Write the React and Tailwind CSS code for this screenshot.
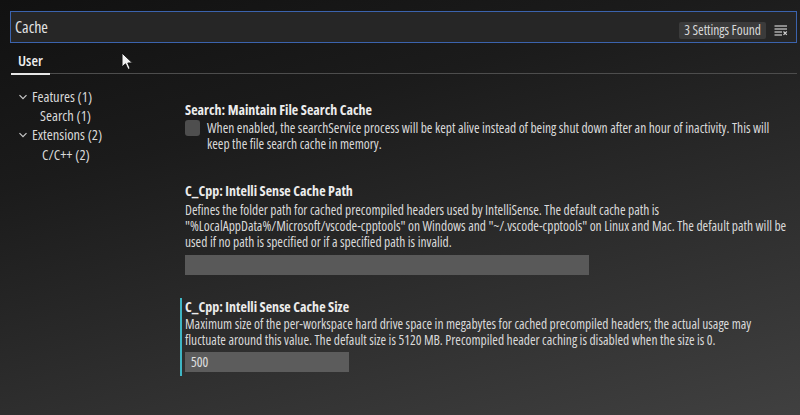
import React from "react";

function Chevron() {
  return (
    <svg width="10" height="10" viewBox="0 0 10 10" className="shrink-0">
      <polyline points="1.5,3.2 5,6.7 8.5,3.2" fill="none" stroke="#c9c9c9" strokeWidth="1.2" />
    </svg>
  );
}

function FilterIcon() {
  return (
    <svg width="14" height="12" viewBox="0 0 14 12">
      <g stroke="#cfcfcf" strokeWidth="1.2">
        <line x1="0.5" y1="2" x2="13" y2="2" />
        <line x1="0.5" y1="5" x2="13" y2="5" />
        <line x1="0.5" y1="8" x2="8" y2="8" />
        <line x1="0.5" y1="11" x2="8" y2="11" />
        <line x1="9.5" y1="7.5" x2="12.8" y2="10.8" />
        <line x1="12.8" y1="7.5" x2="9.5" y2="10.8" />
      </g>
    </svg>
  );
}

function Cursor() {
  return (
    <svg width="13" height="19" viewBox="0 0 13 19" className="absolute left-[121px] top-[52px]">
      <path d="M1 1 L1 15 L4.5 11.8 L7 17.5 L9.2 16.5 L6.8 11 L11.5 11 Z" fill="#f2f2f2" stroke="#111" strokeWidth="1" strokeLinejoin="round" />
    </svg>
  );
}

function Setting({ title, lines, focused, children }) {
  return (
    <div className={`border-l-2 pl-[3px] ${focused ? "border-[#3fb6c4]" : "border-transparent"}`}>
      <p className="text-[14px] leading-[17px] font-bold text-[#ececec] whitespace-nowrap">{title}</p>
      {children ? children(lines) : null}
    </div>
  );
}

function Desc({ lines }) {
  return (
    <div className="text-[13.5px] leading-[16px] text-[#d9d9d9]">
      {lines.map((l, i) => (
        <span key={i} className="block whitespace-nowrap">{l}</span>
      ))}
    </div>
  );
}

export default function App() {
  return (
    <div className="relative w-[800px] h-[415px] overflow-hidden bg-[linear-gradient(165deg,#111111_0%,#1b1b1b_30%,#2c2c2c_62%,#404040_100%)] font-['Open_Sans',sans-serif] [font-stretch:75%] text-[#d2d2d2]">
      {/* search */}
      <div className="pt-[11px] pl-[10px] pr-[3px]">
        <div className="flex items-center h-[32px] border border-[#3b63ad] bg-[#262626] pl-[4px] pr-[8px]">
          <span className="text-[16px] text-[#e2e2e2]">Cache</span>
          <div className="ml-auto flex items-center gap-[8px] pt-[6px]">
            <span className="bg-[#3b3b3b] rounded-[2px] px-[5px] text-[13.5px] leading-[17px] text-[#d8d8d8]">3 Settings Found</span>
            <FilterIcon />
          </div>
        </div>
      </div>

      {/* tabs */}
      <div className="flex items-end pl-[11px] pr-[3px]">
        <div className="px-[7px] pt-[8px] pb-[4px] border-b-2 border-[#e6e6e6]">
          <span className="block text-[15px] leading-[18px] font-semibold text-[#eeeeee]">User</span>
        </div>
        <div className="flex-1 border-b border-[#4d4d4d] mb-[1px]"></div>
      </div>

      <div className="flex">
        {/* tree */}
        <div className="w-[180px] shrink-0 pt-[12px] pl-[18px] text-[14.5px] text-[#d8d8d8]">
          <div className="flex items-center gap-[4px] h-[19.3px]">
            <Chevron />
            <span>Features (1)</span>
          </div>
          <div className="h-[19.3px] flex items-center pl-[22px]">Search (1)</div>
          <div className="flex items-center gap-[4px] h-[19.3px]">
            <Chevron />
            <span>Extensions (2)</span>
          </div>
          <div className="h-[19.3px] flex items-center pl-[24px]">C/C++ (2)</div>
        </div>

        {/* settings */}
        <div className="flex-1 min-w-0 pt-[26px]">
          <Setting
            title="Search: Maintain File Search Cache"
            lines={[
              "When enabled, the searchService process will be kept alive instead of being shut down after an hour of inactivity. This will",
              "keep the file search cache in memory.",
            ]}
          >
            {(lines) => (
              <div className="flex gap-[7px] mt-[2px]">
                <div className="w-[15px] h-[16px] rounded-[3px] bg-[#4e4e4e] shrink-0"></div>
                <Desc lines={lines} />
              </div>
            )}
          </Setting>

          <div className="mt-[30px]">
            <Setting
              title="C_Cpp: Intelli Sense Cache Path"
              lines={[
                "Defines the folder path for cached precompiled headers used by IntelliSense. The default cache path is",
                "\"%LocalAppData%/Microsoft/vscode-cpptools\" on Windows and \"~/.vscode-cpptools\" on Linux and Mac. The default path will be",
                "used if no path is specified or if a specified path is invalid.",
              ]}
            >
              {(lines) => (
                <div className="mt-[3px]">
                  <Desc lines={lines} />
                  <div className="mt-[5px] w-[404px] h-[20px] bg-[#595959]"></div>
                </div>
              )}
            </Setting>
          </div>

          <div className="mt-[23px]">
            <Setting
              focused
              title="C_Cpp: Intelli Sense Cache Size"
              lines={[
                "Maximum size of the per-workspace hard drive space in megabytes for cached precompiled headers; the actual usage may",
                "fluctuate around this value. The default size is 5120 MB. Precompiled header caching is disabled when the size is 0.",
              ]}
            >
              {(lines) => (
                <div className="mt-[1px] pb-[4px]">
                  <Desc lines={lines} />
                  <div className="mt-[4px] w-[164px] h-[20px] bg-[#5c5c5c] flex items-center pl-[6px] text-[13.5px] text-[#e0e0e0]">500</div>
                </div>
              )}
            </Setting>
          </div>
        </div>
      </div>

      <Cursor />
    </div>
  );
}
